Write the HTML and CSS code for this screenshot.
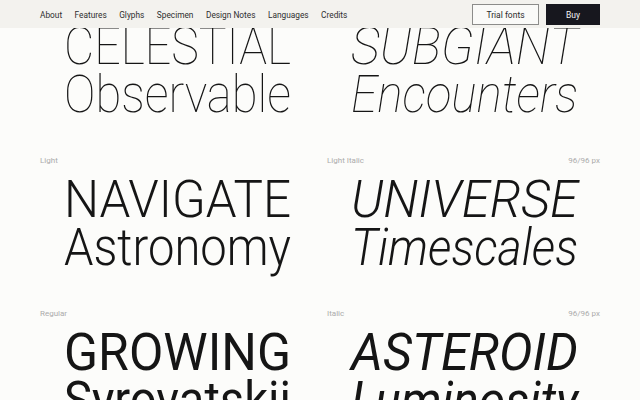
FILE: index.html
```html
<!DOCTYPE html>
<html lang="en">
<head>
<meta charset="utf-8">
<title>Specimen</title>
<link rel="stylesheet" href="styles.css">
</head>
<body>
<header class="topbar">
  <nav class="nav">
    <a href="#">About</a>
    <a href="#">Features</a>
    <a href="#">Glyphs</a>
    <a href="#">Specimen</a>
    <a href="#">Design Notes</a>
    <a href="#">Languages</a>
    <a href="#">Credits</a>
  </nav>
  <div class="actions">
    <a class="btn btn-outline" href="#">Trial fonts</a>
    <a class="btn btn-dark" href="#">Buy</a>
  </div>
</header>

<main class="specimen">
  <section class="row">
    <div class="cell">
      <div class="meta"></div>
      <div class="sample w-thin"><span class="fit">CELESTIAL</span><span class="fit">Observable</span></div>
    </div>
    <div class="cell">
      <div class="meta"></div>
      <div class="sample w-thin italic"><span class="fit">SUBGIANT</span><span class="fit">Encounters</span></div>
    </div>
  </section>

  <section class="row">
    <div class="cell">
      <div class="meta"><span>Light</span></div>
      <div class="sample w-light"><span class="fit">NAVIGATE</span><span class="fit">Astronomy</span></div>
    </div>
    <div class="cell">
      <div class="meta"><span>Light Italic</span><span>96/96 px</span></div>
      <div class="sample w-light italic"><span class="fit">UNIVERSE</span><span class="fit">Timescales</span></div>
    </div>
  </section>

  <section class="row">
    <div class="cell">
      <div class="meta"><span>Regular</span></div>
      <div class="sample w-regular"><span class="fit">GROWING</span><span class="fit">Syrovatskii</span></div>
    </div>
    <div class="cell">
      <div class="meta"><span>Italic</span><span>96/96 px</span></div>
      <div class="sample w-regular italic"><span class="fit">ASTEROID</span><span class="fit">Luminosity</span></div>
    </div>
  </section>
</main>
<script src="script.js"></script>
</body>
</html>
```
FILE: styles.css
```css
html, body {
  margin: 0;
  padding: 0;
}
body {
  background: #fcfcfa;
  font-family: Roboto, "Liberation Sans", sans-serif;
  color: #161616;
  overflow: hidden;
}

.topbar {
  position: fixed;
  top: 0;
  left: 0;
  right: 0;
  height: 28px;
  background: #f3f2ee;
  display: flex;
  align-items: center;
  justify-content: space-between;
  padding: 0 40px;
  box-sizing: border-box;
  z-index: 10;
}
.nav {
  display: flex;
  gap: 12.5px;
  padding-top: 1px;
}
.nav a {
  font-size: 8.3px;
  color: #2e2e2e;
  text-decoration: none;
}
.actions {
  display: flex;
  gap: 7px;
  padding-top: 1px;
}
.btn {
  display: flex;
  align-items: center;
  justify-content: center;
  box-sizing: border-box;
  height: 21px;
  font-size: 8.5px;
  text-decoration: none;
}
.btn-outline {
  width: 67px;
  border: 1px solid #8c8c8a;
  background: #fafaf8;
  color: #2b2b2b;
}
.btn-dark {
  width: 54px;
  background: #17171e;
  color: #f4f4f4;
}

.specimen {
  padding: 3px 40px 0;
}
.row {
  display: grid;
  grid-template-columns: 1fr 1fr;
  column-gap: 14px;
  padding-bottom: 37px;
}
.meta {
  display: flex;
  justify-content: space-between;
  font-size: 8px;
  line-height: 10px;
  color: #ababab;
  height: 10px;
}
.sample {
  margin-top: 10px;
  padding-left: 24px;
  display: flex;
  flex-direction: column;
  align-items: flex-start;
  font-size: 51px;
  line-height: 48px;
  color: #151515;
  white-space: nowrap;
}
.fit {
  display: inline-block;
  height: 48px;
  transform-origin: 0 50%;
}
.w-thin { font-weight: 100; }
.w-light { font-weight: 300; }
.w-regular { font-weight: 400; }
.italic { font-style: italic; }
```
FILE: script.js
```js
(function () {
  var TARGET = 227;
  function fit() {
    var items = document.querySelectorAll('.fit');
    for (var i = 0; i < items.length; i++) {
      var el = items[i];
      el.style.transform = 'none';
      var w = el.getBoundingClientRect().width;
      if (w > 0) {
        el.style.transform = 'scaleX(' + (TARGET / w).toFixed(4) + ')';
      }
    }
  }
  fit();
  if (document.fonts && document.fonts.ready) {
    document.fonts.ready.then(fit);
  }
})();
```
